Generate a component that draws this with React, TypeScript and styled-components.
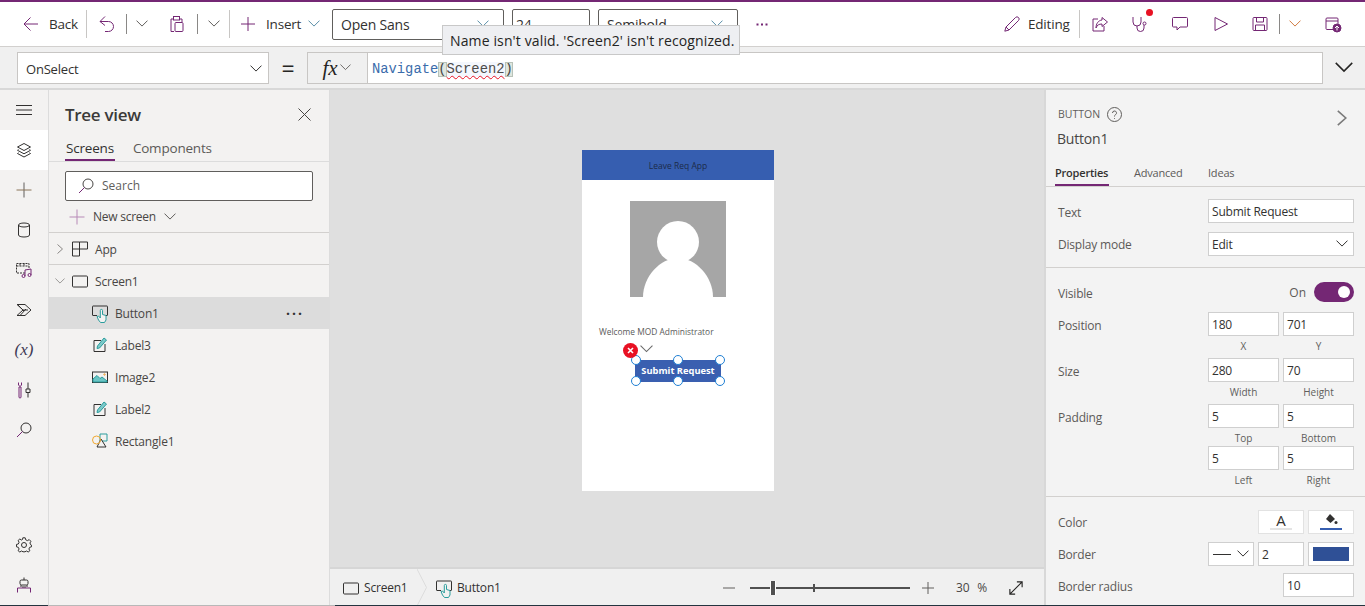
import React from "react"
import styled, { createGlobalStyle } from "styled-components"

const purple = "#742774"
const teal = "#2a9d9d"

const GlobalStyle = createGlobalStyle`
  html, body {
    margin: 0;
    padding: 0;
    height: 100%;
    overflow: hidden;
    background: #fff;
    font-family: "Open Sans", "Liberation Sans", sans-serif;
    color: #323130;
  }
  * { box-sizing: border-box; }
`

const Page = styled.div`
  width: 1365px;
  height: 606px;
  display: flex;
  flex-direction: column;
  position: relative;
  overflow: hidden;
`
const TopStripe = styled.div`
  height: 2px;
  flex: none;
  background: ${purple};
`
const Toolbar = styled.div`
  height: 45px;
  flex: none;
  display: flex;
  align-items: center;
  padding: 0 9px 0 15px;
  background: #fff;
  border-bottom: 1px solid #d2d0ce;
`
const Slot = styled.div<{ $w: number; $color?: string }>`
  width: ${p => p.$w}px;
  flex: none;
  display: flex;
  align-items: center;
  justify-content: center;
  color: ${p => p.$color || purple};
  position: relative;
`
const ToolText = styled.div<{ $w: number; $pad?: number }>`
  width: ${p => p.$w}px;
  flex: none;
  padding-left: ${p => p.$pad || 0}px;
  font-size: 13.5px;
  letter-spacing: -0.2px;
  color: #323130;
  white-space: nowrap;
`
const ToolSep = styled.div<{ $short?: boolean }>`
  width: 1px;
  flex: none;
  height: ${p => (p.$short ? 20 : 28)}px;
  background: ${p => (p.$short ? "#8a8886" : "#c8c6c4")};
`
const ToolSelect = styled.div<{ $w: number; $ml: number; $pad?: number }>`
  width: ${p => p.$w}px;
  margin-left: ${p => p.$ml}px;
  height: 31px;
  flex: none;
  display: flex;
  align-items: center;
  justify-content: space-between;
  padding: 0 14px 0 ${p => p.$pad || 8}px;
  border: 1px solid #605e5c;
  border-radius: 2px;
  font-size: 14px;
  letter-spacing: -0.2px;
  color: #323130;
`
const ToolSpacer = styled.div`
  flex: 1;
`
const AlertDot = styled.span`
  position: absolute;
  right: 7px;
  top: -7px;
  width: 7px;
  height: 7px;
  border-radius: 50%;
  background: #e81123;
`
const Tooltip = styled.div`
  position: absolute;
  left: 442px;
  top: 25px;
  width: 298px;
  height: 30px;
  display: flex;
  align-items: center;
  padding-left: 7px;
  background: #eeeff2;
  border: 1px solid #c8c8c8;
  font-size: 14px;
  letter-spacing: 0.13px;
  color: #252423;
  white-space: nowrap;
  z-index: 5;
`

const FormulaBar = styled.div`
  height: 43px;
  flex: none;
  display: flex;
  align-items: center;
  padding-left: 17px;
  background: #f0f0f0;
  border-bottom: 2px solid #d8d8d8;
`
const PropertySelect = styled.div`
  width: 252px;
  height: 32px;
  margin-top: 1px;
  flex: none;
  display: flex;
  align-items: center;
  justify-content: space-between;
  padding: 2px 3px 0 8px;
  background: #fff;
  border: 1px solid #c8c6c4;
  font-size: 13px;
  letter-spacing: -0.2px;
`
const EqualsSign = styled.div`
  width: 38px;
  flex: none;
  display: flex;
  justify-content: center;
  font-size: 23px;
  line-height: 28px;
  color: #252423;
`
const FxButton = styled.div`
  width: 60px;
  height: 32px;
  flex: none;
  display: flex;
  align-items: center;
  justify-content: center;
  gap: 1px;
  background: #f0f0f0;
  border: 1px solid #c8c6c4;
  border-right: none;
`
const FxGlyph = styled.span`
  font-family: "Liberation Serif", serif;
  font-style: italic;
  font-size: 21px;
  line-height: 26px;
  color: #252423;
`
const Editor = styled.div`
  width: 956px;
  height: 32px;
  flex: none;
  display: flex;
  align-items: center;
  padding: 4px 0 0 4px;
  background: #fff;
  border: 1px solid #c8c6c4;
  font-family: "Liberation Mono", monospace;
  font-size: 13.8px;
  white-space: pre;
`
const CodeFunc = styled.span`
  color: #3b6cab;
`
const CodeBracket = styled.span`
  color: #444;
  background: #dfe6df;
  outline: 1px solid #b8c2b8;
  outline-offset: -1px;
`
const CodeError = styled.span`
  color: #4c4c4c;
  background: #f4f7fd;
  text-decoration: underline wavy #e81123 1px;
  text-underline-offset: 2px;
`
const FormulaChevron = styled.div`
  flex: 1;
  display: flex;
  justify-content: center;
  color: #252423;
`

const Main = styled.div`
  height: 515px;
  flex: none;
  display: flex;
`
const BottomEdge = styled.div`
  height: 1px;
  flex: none;
  background: linear-gradient(
    to right,
    #24343f 0,
    #24343f 48px,
    #b8b8b8 48px,
    #b8b8b8 335px,
    #24343f 335px
  );
`
const Rail = styled.div`
  width: 49px;
  flex: none;
  display: flex;
  flex-direction: column;
  background: #f3f2f1;
  border-right: 1px solid #dcdcdc;
`
const RailItem = styled.div<{ $active?: boolean; $pushed?: boolean }>`
  height: 40px;
  flex: none;
  display: flex;
  align-items: center;
  justify-content: center;
  background: ${p => (p.$active ? "#fff" : "transparent")};
  color: #323130;
  margin-top: ${p => (p.$pushed ? "auto" : 0)};
`
const VariableGlyph = styled.span`
  font-family: "Liberation Serif", serif;
  font-style: italic;
  font-size: 17px;
  line-height: 20px;
  color: #3f3a55;
`
const TreePanel = styled.div`
  width: 281px;
  flex: none;
  display: flex;
  flex-direction: column;
  background: #f3f2f1;
  border-right: 1px solid #dcdcdc;
`
const TreeHeader = styled.div`
  height: 49px;
  flex: none;
  display: flex;
  align-items: center;
  justify-content: space-between;
  padding: 0 18px 0 16px;
`
const TreeTitle = styled.div`
  font-size: 17px;
  font-weight: 600;
  letter-spacing: -0.3px;
  color: #3b3a39;
`
const TreeTabs = styled.div`
  height: 22px;
  flex: none;
  display: flex;
  gap: 17px;
  padding-left: 16px;
  border-bottom: 1px solid #dcdcdc;
  box-sizing: content-box;
`
const TreeTab = styled.div<{ $active?: boolean }>`
  height: 22px;
  padding: 0 1px;
  font-size: 13.5px;
  line-height: 18px;
  letter-spacing: -0.2px;
  color: ${p => (p.$active ? "#323130" : "#5c5a58")};
  border-bottom: 2px solid ${p => (p.$active ? purple : "transparent")};
`
const SearchBox = styled.div`
  width: 248px;
  height: 30px;
  flex: none;
  margin: 9px 0 0 16px;
  display: flex;
  align-items: center;
  gap: 8px;
  padding: 0 0 1px 12px;
  background: #fff;
  border: 1px solid #605e5c;
  border-radius: 2px;
  font-size: 12px;
  color: #605e5c;
`
const NewScreenRow = styled.div`
  height: 32px;
  flex: none;
  display: flex;
  align-items: center;
  padding-left: 20px;
  border-bottom: 1px solid #d2d0ce;
  font-size: 12px;
  letter-spacing: -0.25px;
  color: #484644;
`
const NewScreenLabel = styled.span`
  margin: 0 7px 0 8px;
`
const TreeRow = styled.div<{ $indent: number; $selected?: boolean; $divided?: boolean }>`
  height: 32px;
  flex: none;
  display: flex;
  align-items: center;
  padding-left: ${p => p.$indent}px;
  padding-right: 25px;
  padding-top: ${p => (p.$divided ? 1 : 0)}px;
  font-size: 12px;
  letter-spacing: -0.2px;
  color: #484644;
  background: ${p => (p.$selected ? "#dcdcdc" : "transparent")};
  border-bottom: ${p => (p.$divided ? "1px solid #d2d0ce" : "none")};
`
const TreeCaret = styled.div`
  width: 22px;
  flex: none;
  display: flex;
  justify-content: center;
  color: #8a8886;
`
const TreeIcon = styled.div`
  width: 18px;
  flex: none;
  margin-right: 6px;
  display: flex;
  justify-content: center;
`
const TreeDots = styled.div`
  margin-left: auto;
  font-size: 14px;
  font-weight: 700;
  letter-spacing: 2px;
  line-height: 8px;
  padding-bottom: 6px;
  color: #323130;
`

const CanvasColumn = styled.div`
  width: 715px;
  flex: none;
  display: flex;
  flex-direction: column;
`
const CanvasArea = styled.div`
  height: 477px;
  flex: none;
  padding: 60px 0 0 252px;
  background: #dfdfdf;
`
const Phone = styled.div`
  width: 192px;
  height: 341px;
  display: flex;
  flex-direction: column;
  align-items: center;
  background: #fff;
`
const PhoneHeader = styled.div`
  width: 100%;
  height: 30px;
  flex: none;
  display: flex;
  align-items: center;
  justify-content: center;
  background: #365eb0;
  font-size: 8.5px;
  color: #1c2b4a;
`
const PersonImage = styled.div`
  width: 96px;
  height: 96px;
  margin-top: 21px;
  flex: none;
  background: #a6a6a6;
`
const WelcomeText = styled.div`
  align-self: flex-start;
  margin: 29px 0 0 17px;
  font-size: 8.4px;
  line-height: 11px;
  color: #5a5a5a;
  white-space: nowrap;
`
const SelectedButton = styled.div`
  position: relative;
  width: 86px;
  height: 22px;
  margin-top: 23px;
  padding-bottom: 1px;
  display: flex;
  align-items: center;
  justify-content: center;
  background: #3a5fb0;
  border-radius: 3px;
  color: #fff;
  font-size: 9.3px;
  font-weight: 700;
  white-space: nowrap;
`
const Handle = styled.span<{ $x: number; $y: number }>`
  position: absolute;
  left: ${p => p.$x - 5}px;
  top: ${p => p.$y - 5}px;
  width: 10px;
  height: 10px;
  border-radius: 50%;
  background: #fff;
  border: 1.5px solid #1f7fd4;
`
const ErrorBadge = styled.span`
  position: absolute;
  left: -12px;
  top: -17px;
  width: 15px;
  height: 15px;
  border-radius: 50%;
  background: #e81123;
  display: flex;
  align-items: center;
  justify-content: center;
  color: #fff;
`
const BadgeChevron = styled.span`
  position: absolute;
  left: 5px;
  top: -15px;
  display: flex;
  color: #6a6a6a;
`

const StatusBar = styled.div`
  flex: 1;
  display: flex;
  align-items: center;
  background: #f0f0f0;
  border-top: 2px solid #d6d6d6;
  font-size: 12px;
  letter-spacing: -0.2px;
  color: #323130;
`
const Crumb = styled.div<{ $w: number; $pad: number }>`
  width: ${p => p.$w}px;
  height: 100%;
  flex: none;
  display: flex;
  align-items: center;
  gap: 5px;
  padding-left: ${p => p.$pad}px;
  white-space: nowrap;
`
const CrumbDivider = styled.div`
  width: 10px;
  height: 100%;
  flex: none;
  display: flex;
  color: #dcdcdc;
`
const ZoomBlock = styled.div`
  flex: 1;
  display: flex;
  align-items: center;
  padding-left: 196px;
`
const ZoomTrack = styled.div`
  position: relative;
  width: 160px;
  height: 2px;
  margin: 0 12px 0 15px;
  flex: none;
  background: #505050;
`
const ZoomThumb = styled.span`
  position: absolute;
  left: 21px;
  top: -6px;
  width: 4px;
  height: 14px;
  background: #505050;
  border: 1px solid #fff;
  border-width: 0 1px;
  box-sizing: content-box;
  margin-left: -1px;
`
const ZoomTick = styled.span`
  position: absolute;
  left: 63px;
  top: -3px;
  width: 2px;
  height: 8px;
  background: #505050;
`
const ZoomValue = styled.span<{ $ml: number }>`
  margin-left: ${p => p.$ml}px;
  color: #484644;
`
const ExpandIcon = styled.div`
  margin-left: 22px;
  display: flex;
  color: #252423;
`

const PropsPanel = styled.div`
  flex: 1;
  margin-left: -1px;
  display: flex;
  flex-direction: column;
  background: #f3f3f3;
  border-left: 2px solid #d8d8d8;
  position: relative;
`
const PropsHeader = styled.div`
  height: 75px;
  flex: none;
  padding: 14px 18px 0 12px;
  display: flex;
  flex-direction: column;
`
const KindRow = styled.div`
  height: 20px;
  display: flex;
  align-items: center;
  gap: 7px;
  font-size: 10.5px;
  color: #605e5c;
`
const KindChevron = styled.div`
  margin-left: auto;
  display: flex;
  color: #7a7a7a;
  padding-top: 8px;
`
const ControlName = styled.div`
  margin: 5px 0 0 -1px;
  font-size: 14px;
  letter-spacing: -0.2px;
  color: #484644;
`
const PropsTabs = styled.div`
  height: 21px;
  flex: none;
  display: flex;
  padding-left: 9px;
  border-bottom: 1px solid #d2d0ce;
  box-sizing: content-box;
`
const PropsTab = styled.div<{ $active?: boolean; $w: number }>`
  width: ${p => p.$w}px;
  height: 21px;
  margin-right: ${p => (p.$active ? 25 : 26)}px;
  font-size: 11px;
  line-height: 15px;
  letter-spacing: -0.2px;
  white-space: nowrap;
  font-weight: ${p => (p.$active ? 600 : 400)};
  color: ${p => (p.$active ? "#323130" : "#5c5a58")};
  border-bottom: 2px solid ${p => (p.$active ? purple : "transparent")};
`
const PropSection = styled.div<{ $h: number }>`
  height: ${p => p.$h}px;
  flex: none;
  padding: 0 11px 0 12px;
  display: flex;
  flex-direction: column;
`
const SectionRule = styled.div`
  height: 1px;
  flex: none;
  background: #d2d0ce;
`
const PropRow = styled.div<{ $h?: number; $mt?: number }>`
  height: ${p => p.$h || 24}px;
  margin-top: ${p => p.$mt || 0}px;
  flex: none;
  display: flex;
  align-items: center;
  justify-content: space-between;
`
const PropLabel = styled.div<{ $flush?: boolean }>`
  padding-top: ${p => (p.$flush ? 0 : 2)}px;
  font-size: 12px;
  letter-spacing: -0.2px;
  color: #5c5a58;
`
const PropFields = styled.div`
  display: flex;
  gap: 4px;
`
const Field = styled.div<{ $w: number; $between?: boolean }>`
  width: ${p => p.$w}px;
  height: 24px;
  flex: none;
  display: flex;
  align-items: center;
  justify-content: ${p => (p.$between ? "space-between" : "flex-start")};
  padding: 0 3px;
  background: #fff;
  border: 1px solid #cfcfcf;
  font-size: 12px;
  letter-spacing: -0.2px;
  color: #323130;
  white-space: nowrap;
`
const ColorSwatch = styled.div<{ $w: number }>`
  width: ${p => p.$w}px;
  height: 24px;
  flex: none;
  padding: 4px 4px;
  background: #fff;
  border: 1px solid #cfcfcf;
  display: flex;
`
const SwatchFill = styled.div`
  flex: 1;
  background: #2f5096;
`
const IconSwatch = styled.div`
  width: 46px;
  height: 24px;
  flex: none;
  position: relative;
  display: flex;
  justify-content: center;
  background: #fff;
  border: 1px solid #e2e2e2;
  font-size: 15px;
  line-height: 19px;
  color: #323130;
`
const SwatchBar = styled.span<{ $color: string }>`
  position: absolute;
  left: 11px;
  right: 11px;
  bottom: 3px;
  height: 2px;
  background: ${p => p.$color};
`
const SubLabels = styled.div`
  margin-top: 3px;
  height: 14px;
  flex: none;
  align-self: flex-end;
  display: flex;
  gap: 4px;
`
const SubLabel = styled.div`
  width: 71px;
  text-align: center;
  font-size: 10px;
  line-height: 14px;
  color: #605e5c;
`
const ToggleRow = styled.div`
  display: flex;
  align-items: center;
  gap: 8px;
  font-size: 12px;
  color: #5c5a58;
`
const Toggle = styled.div`
  width: 40px;
  height: 20px;
  display: flex;
  align-items: center;
  justify-content: flex-end;
  padding-right: 4px;
  border-radius: 10px;
  background: ${purple};
`
const ToggleKnob = styled.span`
  width: 12px;
  height: 12px;
  border-radius: 50%;
  background: #fff;
`
const LineSample = styled.span`
  width: 18px;
  height: 1px;
  margin-left: 1px;
  background: #323130;
`

const Svg = styled.svg`
  display: block;
  flex: none;
  fill: none;
  stroke: currentColor;
  stroke-width: 1;
  overflow: visible;
`

type IconProps = { size?: number; box?: number; children: React.ReactNode; h?: number }
const Icon = ({ size = 16, h, box = 16, children }: IconProps) => (
  <Svg width={size} height={h || size} viewBox={`0 0 ${box} ${box}`}>
    {children}
  </Svg>
)

const Chevron = ({ w = 12, color }: { w?: number; color?: string }) => (
  <svg width={w} height={w * 0.6} viewBox="0 0 12 7" style={{ display: "block", flex: "none" }} fill="none" stroke={color || "currentColor"} strokeWidth="1">
    <path d="M0.5 0.5 L6 6 L11.5 0.5" />
  </svg>
)

const ChevronRightIcon = ({ h = 10 }: { h?: number }) => (
  <svg width={h * 0.6} height={h} viewBox="0 0 6 10" style={{ display: "block" }} fill="none" stroke="currentColor" strokeWidth="1">
    <path d="M0.5 0.5 L5.5 5 L0.5 9.5" />
  </svg>
)

const ScreenIcon = () => (
  <Icon>
    <rect x="0.5" y="3" width="15" height="11" rx="1" stroke="#323130" />
  </Icon>
)
const ButtonIcon = () => (
  <Icon>
    <path d="M5 10.5 H1 a0.5 0.5 0 0 1 -0.5 -0.5 V1.5 a0.5 0.5 0 0 1 0.5 -0.5 H15 a0.5 0.5 0 0 1 0.5 0.5 V10 a0.5 0.5 0 0 1 -0.5 0.5 H14" stroke="#323130" />
    <path d="M5 11.5 L6.5 15 L8.5 17.5 H12.5 L14 15 V10.5 L10.5 9.5 V5.5 a1.1 1.1 0 0 0 -2.2 0 V13 L6.5 11 Z" stroke={teal} fill="#f3f2f1" />
  </Icon>
)
const LabelIcon = () => (
  <Icon>
    <path d="M13 7 V14.5 H2 V3.5 H9" stroke="#323130" />
    <path d="M5 11.5 L5.5 9 L12 1 L14.5 3 L7.5 11 Z" stroke={teal} fill="#7fcaca" />
  </Icon>
)
const ImageIcon = () => (
  <Icon>
    <rect x="0.5" y="3" width="15" height="10.5" stroke="#323130" />
    <path d="M1 13 V10 L5 6.5 L8 9.5 L10 8 L15 12 V13 Z" stroke={teal} fill="#6cc5c5" />
    <circle cx="12.5" cy="5.5" r="0.7" stroke="#f0a030" />
  </Icon>
)
const ShapesIcon = () => (
  <Icon>
    <path d="M8 1 H15 V8 H8 Z" stroke={teal} />
    <path d="M9 6 L14 14 H5 Z" stroke="#323130" fill="#f3f2f1" />
    <circle cx="4.5" cy="7" r="4" stroke="#f0a830" />
  </Icon>
)

const handles: [number, number][] = [
  [1, 0],
  [43, 0],
  [85, 0],
  [1, 21],
  [43, 21],
  [85, 21],
]

const App = () => {
  return (
    <Page>
      <GlobalStyle />
      <TopStripe />
      <Toolbar>
        <Slot $w={31}>
          <Icon>
            <path d="M15 8 H1 M7.5 1.5 L1 8 L7.5 14.5" />
          </Icon>
        </Slot>
        <ToolText $w={40} $pad={3}>Back</ToolText>
        <ToolSep />
        <Slot $w={39}>
          <Icon>
            <path d="M6 0.5 L1 5.5 L6 9.5 M1 5.5 H9.5 a5 5 0 0 1 0 10 H6" />
          </Icon>
        </Slot>
        <ToolSep $short />
        <Slot $w={30} $color="#605e5c"><Chevron /></Slot>
        <Slot $w={40}>
          <Icon>
            <path d="M4.5 3 H2 V15.5 H5 M10.5 3 H13 V6" />
            <rect x="4.5" y="0.5" width="6" height="3.5" />
            <rect x="6" y="6.5" width="8" height="9" rx="1" />
          </Icon>
        </Slot>
        <ToolSep $short />
        <Slot $w={31} $color="#605e5c"><Chevron /></Slot>
        <ToolSep />
        <Slot $w={36}>
          <Icon><path d="M8 1 V15 M1 8 H15" /></Icon>
        </Slot>
        <ToolText $w={36}>Insert</ToolText>
        <Slot $w={24} $color="#5b8fa8"><Chevron /></Slot>
        <ToolSelect $w={172} $ml={6}>Open Sans<Chevron color="#5b8fa8" /></ToolSelect>
        <ToolSelect $w={78} $ml={8} $pad={3}>24</ToolSelect>
        <ToolSelect $w={140} $ml={8}>Semibold<Chevron color="#5b8fa8" /></ToolSelect>
        <Slot $w={48}>
          <svg width="12" height="3" viewBox="0 0 12 3" fill={purple}>
            <rect x="0.5" y="0.5" width="2" height="2" />
            <rect x="5" y="0.5" width="2" height="2" />
            <rect x="9.5" y="0.5" width="2" height="2" />
          </svg>
        </Slot>
        <ToolSpacer />
        <Slot $w={28}>
          <Icon>
            <path d="M0.8 15.2 L2 11 L11.5 1.5 a1.8 1.8 0 0 1 3 3 L5 14 Z M2 11 L5 14" />
          </Icon>
        </Slot>
        <ToolText $w={53} $pad={2}>Editing</ToolText>
        <ToolSep />
        <Slot $w={40}>
          <Icon>
            <path d="M6 3 H1 V15 H12 V10" />
            <path d="M10 1.5 L15.5 6 L10 10.5 V8 C7 8 5 9 4 12 C4 8 6 4.5 10 4 Z" />
          </Icon>
        </Slot>
        <Slot $w={40}>
          <Icon>
            <path d="M1 1 V6 a4 4 0 0 0 8 0 V1 M5 10 V12 a3.5 3.5 0 0 0 7 0 V9" />
            <circle cx="12.5" cy="7.5" r="1.5" />
          </Icon>
          <AlertDot />
        </Slot>
        <Slot $w={40}>
          <Icon>
            <path d="M1.5 1.5 H14.5 a1 1 0 0 1 1 1 V10 a1 1 0 0 1 -1 1 H8 L5 14 V11 H1.5 a1 1 0 0 1 -1 -1 V2.5 a1 1 0 0 1 1 -1 Z" />
          </Icon>
        </Slot>
        <Slot $w={41}>
          <Icon><path d="M2 1.5 L14.5 8 L2 14.5 Z" /></Icon>
        </Slot>
        <Slot $w={38}>
          <Icon>
            <path d="M1 2.5 a1 1 0 0 1 1 -1 H14 a1 1 0 0 1 1 1 V13.5 a1 1 0 0 1 -1 1 H2 a1 1 0 0 1 -1 -1 Z" />
            <path d="M4.5 1.5 V6 H11.5 V1.5 M3.5 14.5 V9 H12.5 V14.5" />
          </Icon>
        </Slot>
        <ToolSep $short />
        <Slot $w={30} $color="#d07a40"><Chevron /></Slot>
        <Slot $w={46}>
          <Icon>
            <path d="M8 13.5 H2 a1 1 0 0 1 -1 -1 V3 a1 1 0 0 1 1 -1 H12 a1 1 0 0 1 1 1 V8 M1 5 H13" />
            <circle cx="12" cy="12" r="4" fill={purple} />
            <path d="M12 14.5 V10 M10 12 L12 10 L14 12" stroke="#fff" />
          </Icon>
        </Slot>
      </Toolbar>
      <Tooltip>Name isn't valid. 'Screen2' isn't recognized.</Tooltip>

      <FormulaBar>
        <PropertySelect>OnSelect<Slot $w={18} $color="#323130"><Chevron /></Slot></PropertySelect>
        <EqualsSign>=</EqualsSign>
        <FxButton>
          <FxGlyph>fx</FxGlyph>
          <Slot $w={14} $color="#605e5c"><Chevron w={11} /></Slot>
        </FxButton>
        <Editor>
          <CodeFunc>Navigate</CodeFunc>
          <CodeBracket>(</CodeBracket>
          <CodeError>Screen2</CodeError>
          <CodeBracket>)</CodeBracket>
        </Editor>
        <FormulaChevron><Chevron w={18} /></FormulaChevron>
      </FormulaBar>

      <Main>
        <Rail>
          <RailItem>
            <Icon><path d="M0 3.5 H16 M0 8 H16 M0 12.5 H16" /></Icon>
          </RailItem>
          <RailItem $active>
            <Icon>
              <path d="M8 1.5 L14.5 5 L8 8.5 L1.5 5 Z M2.5 7.5 L1.5 8.3 L8 11.8 L14.5 8.3 L13.5 7.5 M2.5 10.7 L1.5 11.5 L8 15 L14.5 11.5 L13.5 10.7" />
            </Icon>
          </RailItem>
          <RailItem>
            <Icon><path d="M8 0.5 V15.5" stroke="#605e5c" /><path d="M0.5 8 H15.5" stroke="#8a7458" /></Icon>
          </RailItem>
          <RailItem>
            <Icon>
              <ellipse cx="8" cy="3" rx="5.5" ry="2" />
              <path d="M2.5 3 V13 C2.5 14.2 5 15 8 15 C11 15 13.5 14.2 13.5 13 V3" />
            </Icon>
          </RailItem>
          <RailItem>
            <Icon>
              <path d="M9 11 H0.5 V1.5 H13 V6 M0.5 4 H13 M4 1.5 V4 M8 1.5 V4" strokeDasharray="2 1" />
              <path d="M9 14 V8 L15 7 V13" stroke={purple} />
              <circle cx="7.5" cy="14" r="1.5" stroke={purple} />
              <circle cx="13.5" cy="13" r="1.5" stroke={purple} />
            </Icon>
          </RailItem>
          <RailItem>
            <Icon>
              <path d="M1 2.5 H9 L15 8 L9 13.5 H1 L7 8 Z M7 8 L12 8 M4.5 13 L10 7 M2 3 L8 9" />
            </Icon>
          </RailItem>
          <RailItem>
            <VariableGlyph>(x)</VariableGlyph>
          </RailItem>
          <RailItem>
            <Icon>
              <path d="M2.5 0.5 V3 L4 4.5 L5.5 3 V0.5 M3 5 H5 V15 a1 1 0 0 1 -2 0 Z" stroke={purple} />
              <path d="M12 0.5 V7 M12 10.5 V15.5 M10 7 H14 V10.5 H10 Z" stroke="#323130" />
            </Icon>
          </RailItem>
          <RailItem>
            <Icon>
              <circle cx="10" cy="6" r="5" />
              <path d="M6.5 9.5 L1 15" stroke={purple} />
            </Icon>
          </RailItem>
          <RailItem $pushed>
            <Icon>
              <circle cx="8" cy="8" r="2.5" />
              <path d="M6.8 0.8 H9.2 L9.7 2.8 L11.5 3.6 L13.2 2.6 L14.9 4.3 L13.9 6 L14.7 7.8 L15.5 8.2 V9.8 L13.7 10.3 L12.9 12 L13.9 13.7 L12.2 15 L10.5 14 L9 14.8 H7 L5.5 14 L3.8 15 L2.1 13.7 L3.1 12 L2.3 10.3 L0.5 9.8 V7.4 L2.3 7 L3.1 5.2 L2.1 3.5 L3.8 2 L5.5 3 L6.5 2.5 Z" />
            </Icon>
          </RailItem>
          <RailItem>
            <Icon>
              <path d="M8 0.5 V3" />
              <rect x="4" y="3" width="8" height="5" rx="1.5" />
              <path d="M6 10 H10 M5 8 V10 M11 8 V10" />
              <path d="M1.5 15.5 V11 H14.5 V15.5" stroke={purple} />
            </Icon>
          </RailItem>
        </Rail>

        <TreePanel>
          <TreeHeader>
            <TreeTitle>Tree view</TreeTitle>
            <Icon size={13} box={13}><path d="M0.5 0.5 L12.5 12.5 M12.5 0.5 L0.5 12.5" stroke="#484644" /></Icon>
          </TreeHeader>
          <TreeTabs>
            <TreeTab $active>Screens</TreeTab>
            <TreeTab>Components</TreeTab>
          </TreeTabs>
          <SearchBox>
            <Icon>
              <circle cx="10" cy="6" r="5" stroke="#484644" />
              <path d="M6.5 9.5 L1 15" stroke={purple} />
            </Icon>
            Search
          </SearchBox>
          <NewScreenRow>
            <Icon><path d="M8 0.5 V15.5 M0.5 8 H15.5" stroke="#b78ab7" /></Icon>
            <NewScreenLabel>New screen</NewScreenLabel>
            <Slot $w={14} $color="#605e5c"><Chevron /></Slot>
          </NewScreenRow>
          <TreeRow $indent={0} $divided>
            <TreeCaret><ChevronRightIcon /></TreeCaret>
            <TreeIcon>
              <Icon><path d="M0.5 1 H7.5 V8 H0.5 Z M7.5 1 H15.5 V8 H7.5 M0.5 8 V15 H7.5 V8" stroke="#323130" /></Icon>
            </TreeIcon>
            <span>App</span>
          </TreeRow>
          <TreeRow $indent={0}>
            <TreeCaret><Chevron w={10} /></TreeCaret>
            <TreeIcon><ScreenIcon /></TreeIcon>
            <span>Screen1</span>
          </TreeRow>
          <TreeRow $indent={42} $selected>
            <TreeIcon><ButtonIcon /></TreeIcon>
            <span>Button1</span>
            <TreeDots>...</TreeDots>
          </TreeRow>
          <TreeRow $indent={42}>
            <TreeIcon><LabelIcon /></TreeIcon>
            <span>Label3</span>
          </TreeRow>
          <TreeRow $indent={42}>
            <TreeIcon><ImageIcon /></TreeIcon>
            <span>Image2</span>
          </TreeRow>
          <TreeRow $indent={42}>
            <TreeIcon><LabelIcon /></TreeIcon>
            <span>Label2</span>
          </TreeRow>
          <TreeRow $indent={42}>
            <TreeIcon><ShapesIcon /></TreeIcon>
            <span>Rectangle1</span>
          </TreeRow>
        </TreePanel>

        <CanvasColumn>
          <CanvasArea>
            <Phone>
              <PhoneHeader>Leave Req App</PhoneHeader>
              <PersonImage>
                <svg width="96" height="96" viewBox="0 0 96 96" fill="#fff" style={{ display: "block" }}>
                  <circle cx="48" cy="41" r="21" />
                  <path d="M13 96 C13 76 30 57 48 57 C66 57 83 76 83 96 Z" />
                </svg>
              </PersonImage>
              <WelcomeText>Welcome MOD Administrator</WelcomeText>
              <SelectedButton>
                Submit Request
                {handles.map(([x, y]) => (
                  <Handle key={`${x}-${y}`} $x={x} $y={y} />
                ))}
                <ErrorBadge>
                  <svg width="7" height="7" viewBox="0 0 7 7" fill="none" stroke="#fff" strokeWidth="1.6">
                    <path d="M1 1 L6 6 M6 1 L1 6" />
                  </svg>
                </ErrorBadge>
                <BadgeChevron><Chevron w={13} /></BadgeChevron>
              </SelectedButton>
            </Phone>
          </CanvasArea>
          <StatusBar>
            <Crumb $w={87} $pad={13}>
              <ScreenIcon />
              Screen1
            </Crumb>
            <CrumbDivider>
              <svg width="10" height="37" viewBox="0 0 10 37" fill="none" stroke="currentColor">
                <path d="M0 0 L9.5 18.5 L0 37" />
              </svg>
            </CrumbDivider>
            <Crumb $w={100} $pad={9}>
              <ButtonIcon />
              Button1
            </Crumb>
            <ZoomBlock>
              <Slot $w={12} $color="#605e5c"><Icon size={12} box={12}><path d="M0 6 H12" /></Icon></Slot>
              <ZoomTrack>
                <ZoomThumb />
                <ZoomTick />
              </ZoomTrack>
              <Slot $w={12} $color="#605e5c"><Icon size={12} box={12}><path d="M0 6 H12 M6 0 V12" /></Icon></Slot>
              <ZoomValue $ml={22}>30</ZoomValue>
              <ZoomValue $ml={8}>%</ZoomValue>
              <ExpandIcon>
                <Icon size={14} box={16}>
                  <path d="M1 15 L15 1 M9 1 H15 V7 M1 9 V15 H7" strokeWidth="1.3" />
                </Icon>
              </ExpandIcon>
            </ZoomBlock>
          </StatusBar>
        </CanvasColumn>

        <PropsPanel>
          <PropsHeader>
            <KindRow>
              BUTTON
              <Icon size={15} box={15}>
                <circle cx="7.5" cy="7.5" r="7" stroke="#605e5c" />
                <path d="M5.5 6 a2 2 0 1 1 3 1.7 C7.8 8.2 7.5 8.6 7.5 9.5 M7.5 11 V11.8" stroke="#605e5c" />
              </Icon>
              <KindChevron><ChevronRightIcon h={16} /></KindChevron>
            </KindRow>
            <ControlName>Button1</ControlName>
          </PropsHeader>
          <PropsTabs>
            <PropsTab $active $w={54}>Properties</PropsTab>
            <PropsTab $w={48}>Advanced</PropsTab>
            <PropsTab $w={30}>Ideas</PropsTab>
          </PropsTabs>

          <PropSection $h={80}>
            <PropRow $mt={12}>
              <PropLabel>Text</PropLabel>
              <Field $w={146}>Submit Request</Field>
            </PropRow>
            <PropRow $mt={9}>
              <PropLabel $flush>Display mode</PropLabel>
              <Field $w={146} $between>Edit<Slot $w={16} $color="#323130"><Chevron /></Slot></Field>
            </PropRow>
          </PropSection>
          <SectionRule />

          <PropSection $h={228}>
            <PropRow $h={20} $mt={14}>
              <PropLabel>Visible</PropLabel>
              <ToggleRow>
                On
                <Toggle><ToggleKnob /></Toggle>
              </ToggleRow>
            </PropRow>
            <PropRow $mt={10}>
              <PropLabel>Position</PropLabel>
              <PropFields>
                <Field $w={71}>180</Field>
                <Field $w={71}>701</Field>
              </PropFields>
            </PropRow>
            <SubLabels><SubLabel>X</SubLabel><SubLabel>Y</SubLabel></SubLabels>
            <PropRow $mt={5}>
              <PropLabel>Size</PropLabel>
              <PropFields>
                <Field $w={71}>280</Field>
                <Field $w={71}>70</Field>
              </PropFields>
            </PropRow>
            <SubLabels><SubLabel>Width</SubLabel><SubLabel>Height</SubLabel></SubLabels>
            <PropRow $mt={5}>
              <PropLabel>Padding</PropLabel>
              <PropFields>
                <Field $w={71}>5</Field>
                <Field $w={71}>5</Field>
              </PropFields>
            </PropRow>
            <SubLabels><SubLabel>Top</SubLabel><SubLabel>Bottom</SubLabel></SubLabels>
            <PropRow $mt={1}>
              <span />
              <PropFields>
                <Field $w={71}>5</Field>
                <Field $w={71}>5</Field>
              </PropFields>
            </PropRow>
            <SubLabels><SubLabel>Left</SubLabel><SubLabel>Right</SubLabel></SubLabels>
          </PropSection>
          <SectionRule />

          <PropSection $h={109}>
            <PropRow $mt={13}>
              <PropLabel $flush>Color</PropLabel>
              <PropFields>
                <IconSwatch>A<SwatchBar $color="#e4e4e4" /></IconSwatch>
                <IconSwatch>
                  <svg width="14" height="13" viewBox="0 0 14 13" fill="#323130" style={{ marginTop: 2 }}>
                    <path d="M6 1 L11 6 L6.5 10 L2 6 Z" />
                    <circle cx="12" cy="9.5" r="1.5" />
                  </svg>
                  <SwatchBar $color="#365eb0" />
                </IconSwatch>
              </PropFields>
            </PropRow>
            <PropRow $mt={8}>
              <PropLabel $flush>Border</PropLabel>
              <PropFields>
                <Field $w={46} $between><LineSample /><Slot $w={14} $color="#323130"><Chevron /></Slot></Field>
                <Field $w={46}>2</Field>
                <ColorSwatch $w={46}><SwatchFill /></ColorSwatch>
              </PropFields>
            </PropRow>
            <PropRow $mt={7}>
              <PropLabel>Border radius</PropLabel>
              <Field $w={71}>10</Field>
            </PropRow>
          </PropSection>
        </PropsPanel>
      </Main>
      <BottomEdge />
    </Page>
  )
}

export default App
